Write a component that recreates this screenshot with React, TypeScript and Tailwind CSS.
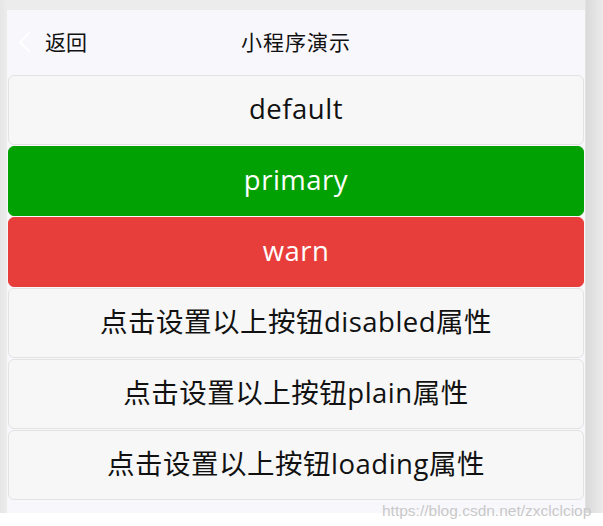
export default function App() {
  const buttons = [
    { text: "default", cls: "bg-[#f7f7f7] text-[#111] border border-[#e2e2e2]" },
    { text: "primary", cls: "bg-[#02a103] text-white border border-[#02a103]" },
    { text: "warn", cls: "bg-[#e83e3b] text-white border border-[#e83e3b]" },
    { text: "点击设置以上按钮disabled属性", cls: "bg-[#f7f7f7] text-[#111] border border-[#e2e2e2]" },
    { text: "点击设置以上按钮plain属性", cls: "bg-[#f7f7f7] text-[#111] border border-[#e2e2e2]" },
    { text: "点击设置以上按钮loading属性", cls: "bg-[#f7f7f7] text-[#111] border border-[#e2e2e2]" },
  ];
  return (
    <div
      className="relative w-[603px] h-[526px] bg-white overflow-hidden"
      style={{ fontFamily: '"Open Sans", "Noto Sans CJK SC", sans-serif' }}
    >
      <div className="h-[513px] bg-[linear-gradient(to_right,#e6e6e6_0px,#ececec_7px,#ececec_585px,#dadada_586px,#ebebeb_603px)] pt-[10px] pl-[7px] pr-[18px]">
        <div className="h-[503px] bg-[#f8f7fc] flex flex-col">
          <div className="h-[65px] relative flex items-center justify-center shrink-0">
            <div className="absolute left-[10px] top-[21px] flex items-center">
              <svg width="16" height="22" viewBox="0 0 16 22" fill="none">
                <path d="M13 1 L3 11 L13 21" stroke="#ffffff" strokeWidth="2" />
              </svg>
              <span className="ml-[12px] text-[21px] text-[#111] leading-none">返回</span>
            </div>
            <span className="text-[21px] text-[#111] leading-none tracking-[1px]">小程序演示</span>
          </div>
          <div className="flex flex-col gap-px px-px">
            {buttons.map((b) => (
              <div
                key={b.text}
                className={`h-[70px] rounded-[6px] flex items-center justify-center text-[27.5px] tracking-[0.5px] leading-none pb-[3px] ${b.cls}`}
              >
                {b.text}
              </div>
            ))}
          </div>
        </div>
      </div>
      <div
        className="absolute left-[382px] top-[503px] text-[15.5px] text-[#c9c9c9] leading-none"
        style={{ fontFamily: '"Liberation Sans", Arial, sans-serif' }}
      >
        https://blog.csdn.net/zxclclciop
      </div>
    </div>
  );
}
